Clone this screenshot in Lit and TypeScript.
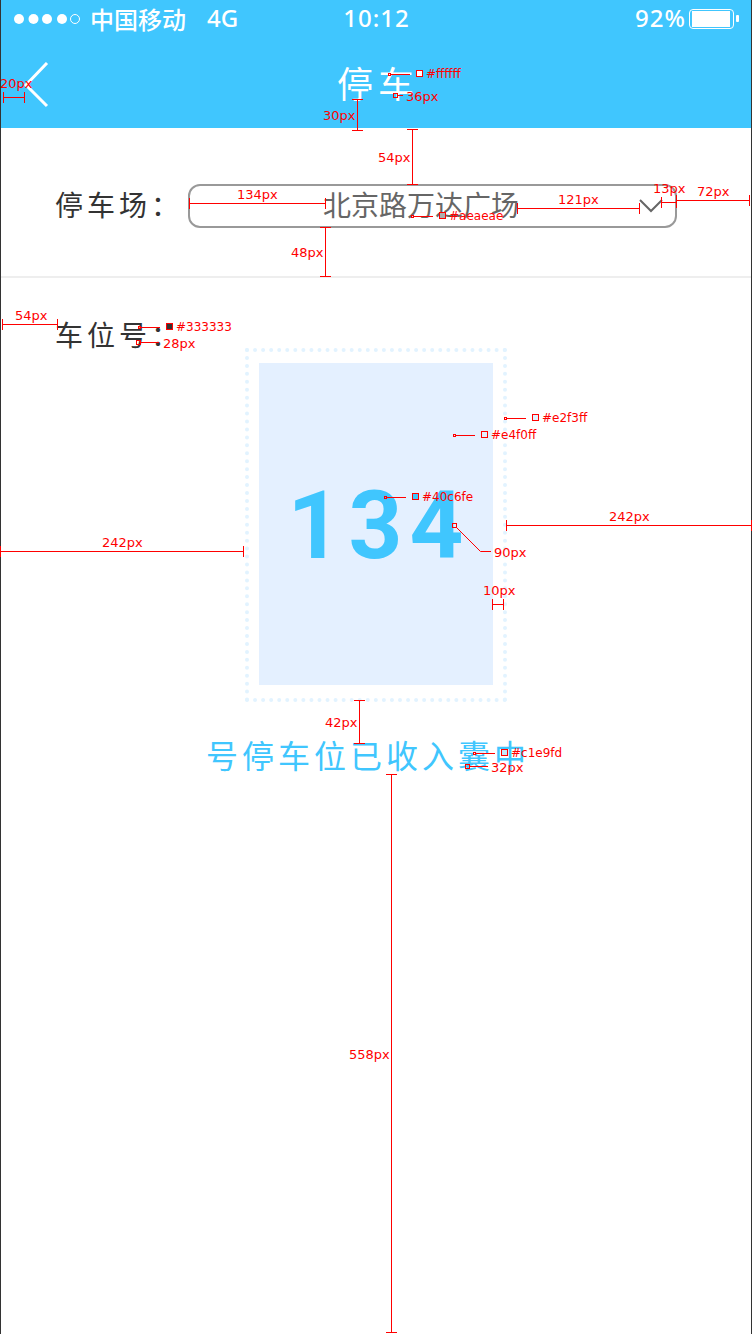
import { LitElement, html, svg, css } from "lit";
import { customElement, state } from "lit/decorators.js";

/** A distance: the measured line with a cap at each end, and its label. */
interface Measure {
  text: string;
  x: number;
  y: number;
  from: [number, number];
  to: [number, number];
}

/** A colour note: small marker, leader line, swatch and hex value. */
interface ColorNote {
  color: string;
  x: number;
  y: number;
  from: number;
}

/** A font size note: marker, leader line and size. */
interface SizeNote {
  text: string;
  x: number;
  y: number;
  marker: [number, number];
  path: string;
}

const MEASURES: Measure[] = [
  { text: "20px", x: 0, y: 88, from: [3, 97], to: [24, 97] },
  { text: "30px", x: 323, y: 120, from: [357, 99], to: [357, 130] },
  { text: "54px", x: 378, y: 162, from: [412, 129], to: [412, 184] },
  { text: "134px", x: 237, y: 199, from: [189, 203], to: [325, 203] },
  { text: "121px", x: 558, y: 204, from: [517, 208], to: [639, 208] },
  { text: "13px", x: 653, y: 193, from: [661, 202], to: [676, 202] },
  { text: "72px", x: 697, y: 196, from: [676, 200], to: [749, 200] },
  { text: "48px", x: 291, y: 257, from: [325, 227], to: [325, 276] },
  { text: "54px", x: 15, y: 320, from: [2, 324], to: [57, 324] },
  { text: "242px", x: 102, y: 547, from: [0, 551], to: [243, 551] },
  { text: "242px", x: 609, y: 521, from: [506, 525], to: [751, 525] },
  { text: "10px", x: 483, y: 595, from: [492, 604], to: [503, 604] },
  { text: "42px", x: 325, y: 727, from: [359, 700], to: [359, 743] },
  { text: "558px", x: 349, y: 1059, from: [391, 774], to: [391, 1332] },
];

const COLORS: ColorNote[] = [
  { color: "#ffffff", x: 416, y: 73, from: 388 },
  { color: "#aeaeae", x: 439, y: 215, from: 411 },
  { color: "#333333", x: 166, y: 326, from: 138 },
  { color: "#e2f3ff", x: 532, y: 417, from: 504 },
  { color: "#e4f0ff", x: 481, y: 434, from: 453 },
  { color: "#40c6fe", x: 412, y: 496, from: 384 },
  { color: "#c1e9fd", x: 501, y: 752, from: 473 },
];

const SIZES: SizeNote[] = [
  { text: "36px", x: 406, y: 101, marker: [393, 93], path: "M398 95.5H403" },
  { text: "28px", x: 163, y: 348, marker: [136, 340], path: "M141 342.5H159" },
  { text: "90px", x: 494, y: 557, marker: [452, 523], path: "M457 528L480.500 551.500H491" },
  { text: "32px", x: 491, y: 772, marker: [465, 764], path: "M470 766.5H488" },
];

@customElement("spec-overlay")
export class SpecOverlay extends LitElement {
  static styles = css`
    :host {
      display: block;
      pointer-events: none;
    }
    .sheet {
      display: block;
    }
    .line {
      fill: none;
      stroke: #f00;
      stroke-width: 1px;
    }
    .label {
      fill: #f00;
      font-family: Verdana, "DejaVu Sans", sans-serif;
      font-size: 13px;
    }
    .hex {
      font-size: 12px;
    }
  `;

  private measure(m: Measure) {
    const [x1, y1] = m.from.map((n) => n + 0.5);
    const [x2, y2] = m.to.map((n) => n + 0.5);
    const d =
      y1 === y2
        ? `M${x1} ${y1}H${x2}M${x1} ${y1 - 5.5}v11M${x2} ${y1 - 5.5}v11`
        : `M${x1} ${y1}V${y2}M${x1 - 5.5} ${y1}h11M${x1 - 5.5} ${y2}h11`;
    return svg`<path class="line" d=${d}></path>
      <text class="label" x=${m.x} y=${m.y}>${m.text}</text>`;
  }

  private colorNote(c: ColorNote) {
    return svg`<rect class="line" x=${c.from + 0.5} y=${c.y + 0.5} width="2" height="2"></rect>
      <path class="line" d=${`M${c.from + 3} ${c.y + 1.5}H${c.from + 22}`}></path>
      <rect class="line" style=${`fill:${c.color}`} x=${c.x + 0.5} y=${c.y - 2.5} width="6" height="6"></rect>
      <text class="label hex" x=${c.x + 10} y=${c.y + 5}>${c.color}</text>`;
  }

  private sizeNote(s: SizeNote) {
    return svg`<rect class="line" x=${s.marker[0] + 0.5} y=${s.marker[1] + 0.5} width="4" height="4"></rect>
      <path class="line" d=${s.path}></path>
      <text class="label" x=${s.x} y=${s.y}>${s.text}</text>`;
  }

  render() {
    return html`<svg class="sheet" width="752" height="1334" viewBox="0 0 752 1334">
      ${MEASURES.map((m) => this.measure(m))}
      ${COLORS.map((c) => this.colorNote(c))}
      ${SIZES.map((s) => this.sizeNote(s))}
    </svg>`;
  }
}

@customElement("app-root")
export class AppRoot extends LitElement {
  static styles = css`
    :host {
      display: block;
      position: relative;
      overflow: hidden;
      font-family: "Noto Sans CJK SC", sans-serif;
      color: #333;
    }
    .screen {
      box-sizing: border-box;
      min-height: 100vh;
      border: solid #333;
      border-width: 0 1px;
      background: #fff;
    }
    .top {
      background: #40c6fe;
      color: #fff;
    }
    .status {
      display: grid;
      grid-template-columns: 1fr auto 1fr;
      align-items: center;
      height: 38px;
      padding: 0 11px 0 12px;
      font-size: 24px;
      line-height: 38px;
      font-weight: 500;
    }
    .carrier {
      display: flex;
      align-items: center;
      gap: 8px;
    }
    .network,
    .digits {
      padding-bottom: 2px;
      font-family: "Noto Sans", sans-serif;
      line-height: 36px;
    }
    .network {
      margin-left: 13px;
    }
    .digits {
      letter-spacing: 1px;
    }
    .power {
      display: flex;
      align-items: center;
      justify-content: flex-end;
      gap: 3px;
    }
    .nav {
      display: grid;
      grid-template-columns: 1fr auto 1fr;
      align-items: center;
      height: 86px;
      padding-top: 4px;
    }
    .back {
      justify-self: start;
      margin: 0;
      padding: 0 0 0 22px;
      border: 0;
      background: none;
      color: inherit;
    }
    svg {
      display: block;
    }
    .title {
      margin: 0;
      padding: 0 0 6px 4px;
      font-size: 36px;
      line-height: 54px;
      font-weight: 400;
      letter-spacing: 5px;
    }
    .row {
      display: flex;
      align-items: flex-start;
      padding: 56px 74px 48px 54px;
      border-bottom: 2px solid #eee;
    }
    .label {
      font-size: 28px;
      line-height: 40px;
      letter-spacing: 4px;
    }
    .field {
      flex: 1;
      display: grid;
      align-items: center;
      margin-left: 5px;
    }
    .select {
      grid-area: 1 / 1;
      box-sizing: border-box;
      width: 100%;
      height: 44px;
      margin: 0;
      padding: 0 23px 4px 0;
      border: 2px solid #999;
      border-radius: 12px;
      background: #fff;
      appearance: none;
      color: #666;
      font: 400 28px/36px "Noto Sans CJK SC", sans-serif;
      text-align: center;
      text-align-last: center;
    }
    .chevron {
      grid-area: 1 / 1;
      justify-self: end;
      margin-right: 14px;
      pointer-events: none;
    }
    .space {
      display: grid;
      align-items: start;
      padding-top: 36px;
    }
    .space-label {
      grid-area: 1 / 1;
      justify-self: start;
      padding-left: 54px;
    }
    .ticket {
      grid-area: 1 / 1;
      justify-self: center;
      margin-top: 34px;
      padding: 11px 10px 13px;
      border: 4px dotted #e2f3ff;
    }
    .number {
      box-sizing: border-box;
      display: grid;
      place-items: center;
      width: 234px;
      height: 322px;
      padding: 4px 0 0 6px;
      background: #e4f0ff;
      color: #40c6fe;
      font: 700 94px/108px Roboto, sans-serif;
      letter-spacing: 7px;
    }
    .message {
      margin: 28px 16px 0 0;
      color: #40c6fe;
      font-size: 32px;
      line-height: 48px;
      letter-spacing: 4px;
      text-align: center;
    }
    .notes {
      position: absolute;
      top: 0;
      left: 0;
    }
  `;

  @state() private lot = "北京路万达广场";

  private pick(e: Event) {
    this.lot = (e.target as HTMLSelectElement).value;
  }

  render() {
    return html`
      <div class="screen">
        <header class="top">
          <div class="status">
            <div class="carrier">
              <svg width="69" height="12" viewBox="0 0 69 12" fill="#fff">
                <circle cx="6" cy="6" r="5"></circle>
                <circle cx="20.500" cy="6" r="5"></circle>
                <circle cx="34" cy="6" r="5"></circle>
                <circle cx="49" cy="6" r="5"></circle>
                <circle cx="62" cy="6" r="4.500" fill="none" stroke="#fff"></circle>
              </svg>
              <span>中国移动</span>
              <span class="network">4G</span>
            </div>
            <span class="digits">10:12</span>
            <div class="power">
              <span class="digits">92%</span>
              <svg width="51" height="20" viewBox="0 0 51 20" fill="#fff">
                <rect x="0.500" y="0.500" width="44" height="19" rx="3.500" fill="none" stroke="#fff"></rect>
                <rect x="3" y="2" width="38" height="16"></rect>
                <rect x="47" y="6" width="3" height="7" rx="1"></rect>
              </svg>
            </div>
          </div>
          <div class="nav">
            <button class="back" type="button" aria-label="返回">
              <svg width="28" height="46" viewBox="0 0 28 46" fill="none" stroke="#fff" stroke-width="3">
                <path d="M24 1L3 23L24 44"></path>
              </svg>
            </button>
            <h1 class="title">停车</h1>
          </div>
        </header>
        <main>
          <div class="row">
            <label class="label" for="lot">停车场：</label>
            <div class="field">
              <select class="select" id="lot" .value=${this.lot} @change=${this.pick}>
                <option>北京路万达广场</option>
              </select>
              <svg class="chevron" width="24" height="14" viewBox="0 0 24 14" fill="none" stroke="#666" stroke-width="2">
                <path d="M1 1L12 12L23 1"></path>
              </svg>
            </div>
          </div>
          <div class="space">
            <span class="label space-label">车位号：</span>
            <div class="ticket"><div class="number">134</div></div>
          </div>
          <p class="message">号停车位已收入囊中</p>
        </main>
      </div>
      <spec-overlay class="notes"></spec-overlay>
    `;
  }
}
